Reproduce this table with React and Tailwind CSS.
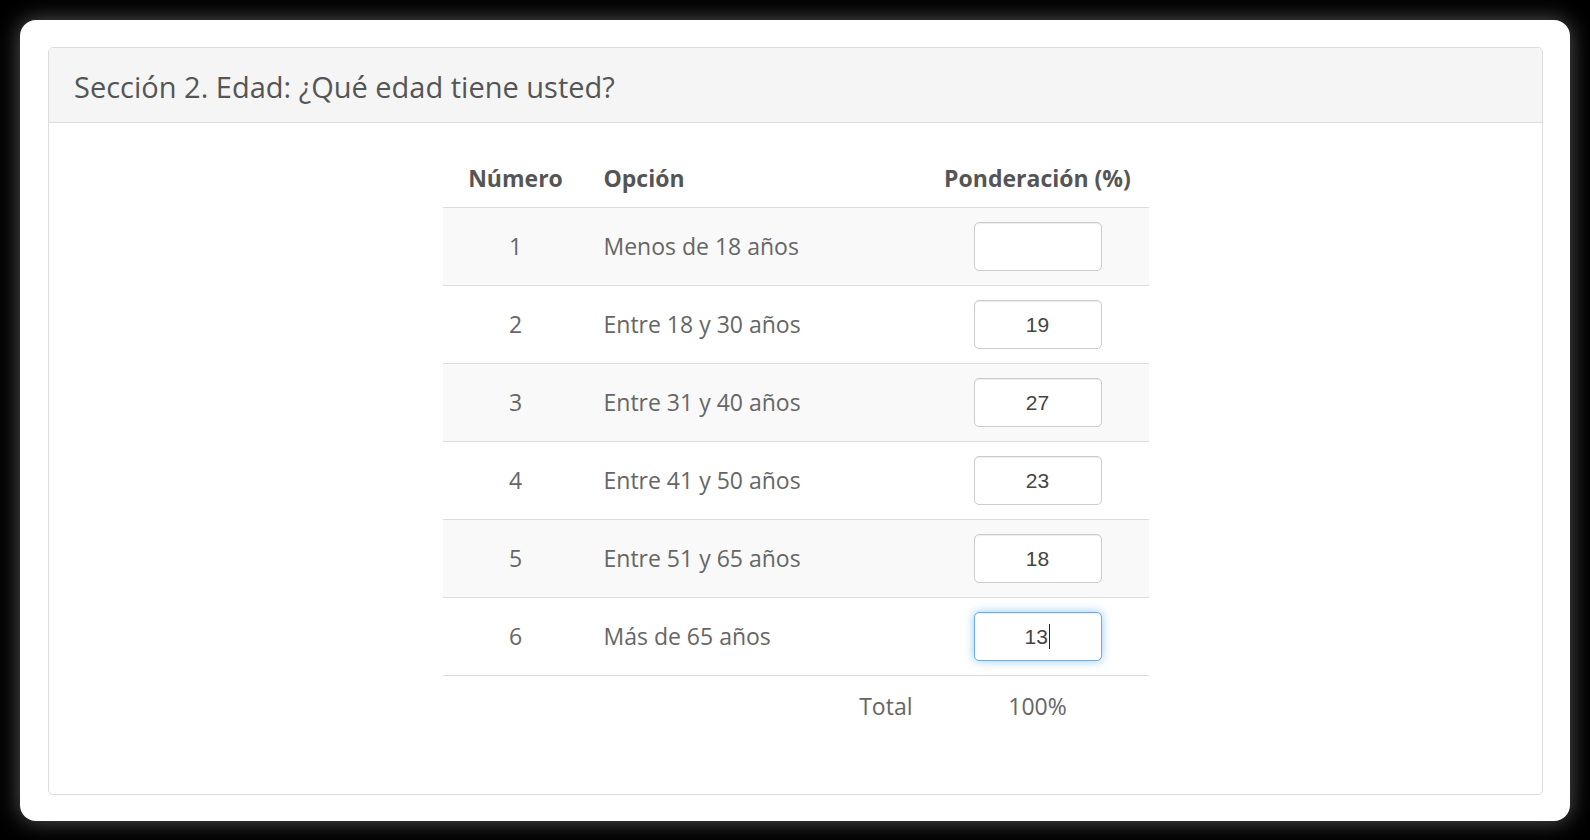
const rows = [
  { n: 1, label: "Menos de 18 años", value: "" },
  { n: 2, label: "Entre 18 y 30 años", value: "19" },
  { n: 3, label: "Entre 31 y 40 años", value: "27" },
  { n: 4, label: "Entre 41 y 50 años", value: "23" },
  { n: 5, label: "Entre 51 y 65 años", value: "18" },
  { n: 6, label: "Más de 65 años", value: "13", focused: true },
];

const WeightInput = ({ value, focused }) => {
  return (
    <div
      className={
        focused
          ? "w-[128px] h-[49px] rounded-[5px] bg-white border border-[#66afe9] shadow-[inset_0_1px_1px_rgba(0,0,0,0.075),0_0_10px_rgba(102,175,233,0.7)] flex items-center justify-center"
          : "w-[128px] h-[49px] rounded-[5px] bg-white border border-[#cccccc] shadow-[inset_0_1px_1px_rgba(0,0,0,0.075)] flex items-center justify-center"
      }
    >
      <span className="text-[21px] text-[#444] font-['Liberation_Sans',Arial,sans-serif] leading-none">
        {value}
      </span>
      {focused && <span className="w-[1.5px] h-[25px] bg-[#222] ml-[1px]" />}
    </div>
  );
};

export default function App() {
  return (
    <div className="w-full h-[840px] bg-black pt-[20px] px-[20px] font-['Open_Sans',sans-serif]">
      <div className="h-[801px] bg-white rounded-[16px] shadow-[0_0_22px_rgba(255,255,255,0.35)] pt-[27px] pl-[28px] pr-[27px]">
        <div className="h-[748px] border border-[#dddddd] rounded-[5px] overflow-hidden">
          <div className="h-[75px] bg-[#f5f5f5] border-b border-[#dddddd] flex items-center pl-[25px]">
            <h1 className="text-[29px] text-[#555] pt-[4px]">
              Sección 2. Edad: ¿Qué edad tiene usted?
            </h1>
          </div>

          <div className="w-[706px] mx-auto">
            <div className="h-[84px] flex items-end pb-[12px] text-[23px] font-bold text-[#555]">
              <div className="w-[146px] text-center">Número</div>
              <div className="w-[338px] pl-[15px]">Opción</div>
              <div className="w-[222px] text-center">Ponderación (%)</div>
            </div>

            {rows.map((r) => (
              <div
                key={r.n}
                className={
                  r.n % 2 === 1
                    ? "h-[78px] border-t border-[#dddddd] bg-[#f9f9f9] flex items-center text-[23px] text-[#666]"
                    : "h-[78px] border-t border-[#dddddd] bg-white flex items-center text-[23px] text-[#666]"
                }
              >
                <div className="w-[146px] text-center">{r.n}</div>
                <div className="w-[338px] pl-[15px]">{r.label}</div>
                <div className="w-[222px] flex justify-center">
                  <WeightInput value={r.value} focused={r.focused} />
                </div>
              </div>
            ))}

            <div className="h-[62px] border-t border-[#dddddd] flex items-center text-[23px] text-[#666]">
              <div className="w-[146px]" />
              <div className="w-[338px] text-right pr-[14px]">Total</div>
              <div className="w-[222px] text-center">100%</div>
            </div>
          </div>
        </div>
      </div>
    </div>
  );
}
